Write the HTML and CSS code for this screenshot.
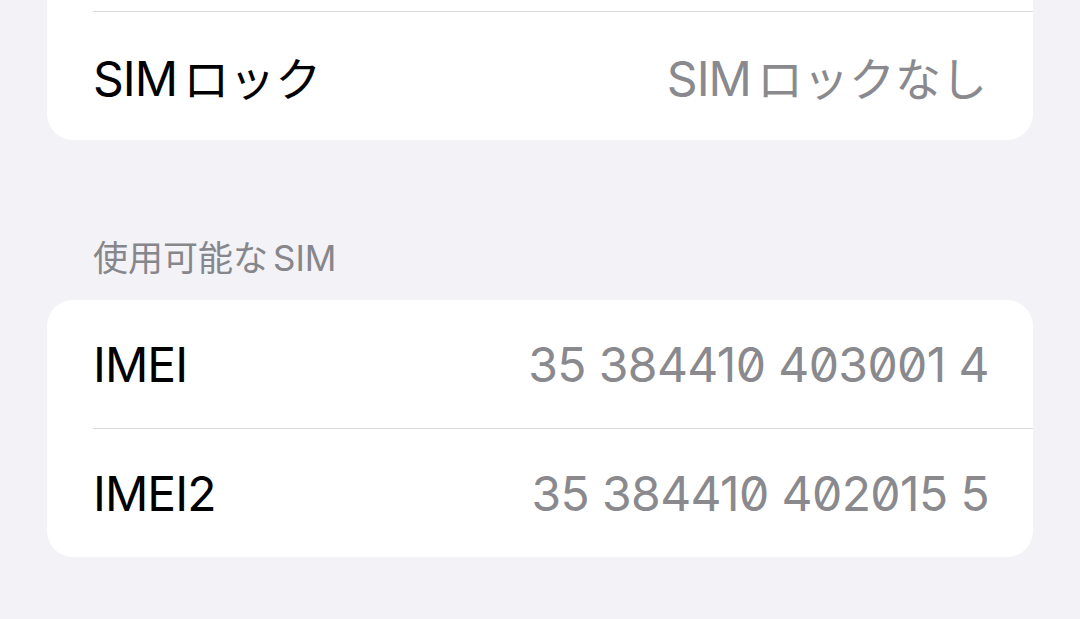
FILE: index.html
```html
<!DOCTYPE html>
<html lang="ja">
<head>
    <meta charset="UTF-8">
    <meta name="viewport" content="width=device-width, initial-scale=1.0">
    <title>情報</title>
    <link rel="stylesheet" href="styles.css">
</head>
<body>
    <div class="settings">
        <!-- 上のグループ（スクロールで上部が隠れている） -->
        <div class="group group-clipped">
            <div class="row">
                <span class="label">SIM<span class="jp">ロック</span></span>
                <span class="value">SIM<span class="jp">ロックなし</span></span>
            </div>
        </div>

        <div class="section-title">使用可能な<span class="latin">SIM</span></div>

        <div class="group">
            <div class="row">
                <span class="label">IMEI</span>
                <span class="value number">35 384410 403001 4</span>
            </div>
            <div class="row">
                <span class="label">IMEI2</span>
                <span class="value number">35 384410 402015 5</span>
            </div>
        </div>
    </div>
</body>
</html>
```

FILE: styles.css
```css
body {
    margin: 0;
    padding: 0;
    background-color: #f2f2f7;
    font-family: Inter, "Noto Sans CJK JP", sans-serif;
    color: #000;
    overflow: hidden;
}

.settings {
    padding: 0 47px;
}

.group {
    background-color: #fff;
    border-radius: 26px;
    overflow: hidden;
}

/* 上が画面外に出ているグループ */
.group-clipped {
    border-radius: 0 0 26px 26px;
    padding-top: 11px;
}

.group-clipped .row {
    border-top: 1px solid #d9d9de;
}

.row {
    display: flex;
    justify-content: space-between;
    align-items: center;
    height: 128px;
    margin-left: 46px;
    padding-right: 46px;
    font-size: 48px;
    letter-spacing: -0.02em;
}

.row + .row {
    border-top: 1px solid #d9d9de;
}

.label {
    color: #000;
}

.value {
    color: #8a8a8e;
}

/* 英字と和文の間の少しのアキ */
.jp {
    margin-left: 6px;
    font-size: 46px;
    letter-spacing: 0;
}

.latin {
    margin-left: 5px;
}

.number {
    font-variant-numeric: slashed-zero;
    letter-spacing: -0.6px;
    margin-right: -2px;
}

.section-title {
    color: #86868b;
    font-size: 35px;
    padding: 96px 0 20px 46px;
    line-height: 44px;
}
```
